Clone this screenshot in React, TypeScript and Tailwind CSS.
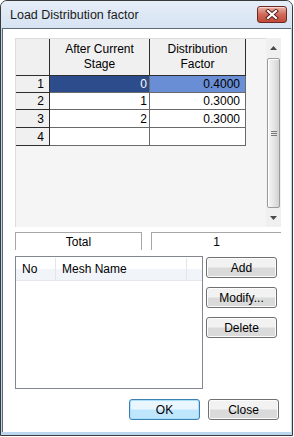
import React from 'react';

const rows = [
  { n: '1', a: '0', b: '0.4000', h: 'h-[17px]', sel: true },
  { n: '2', a: '1', b: '0.3000', h: 'h-[17px]', sel: false },
  { n: '3', a: '2', b: '0.3000', h: 'h-[18px]', sel: false },
  { n: '4', a: '', b: '', h: 'h-[18px]', sel: false },
];

function CloseButton() {
  return (
    <div className="w-[30px] h-[17px] rounded-[3px] border border-[#6e2a22] bg-gradient-to-b from-[#eab2a6] via-[#d06a5a] to-[#c04a38] flex items-center justify-center shadow-[inset_0_1px_0_rgba(255,255,255,0.5)]">
      <svg width="14" height="11" viewBox="0 0 14 11">
        <path d="M3 2 L11 9 M11 2 L3 9" stroke="#5a1d16" strokeWidth="4" strokeLinecap="square" />
        <path d="M3 2 L11 9 M11 2 L3 9" stroke="#ffffff" strokeWidth="2.2" strokeLinecap="square" />
      </svg>
    </div>
  );
}

function Scrollbar() {
  return (
    <div className="w-[15px] bg-[#f0f0f0] flex flex-col">
      <div className="h-[20px] flex items-center justify-center">
        <svg width="7" height="4" viewBox="0 0 7 4">
          <path d="M0 4 L3.5 0 L7 4 Z" fill="#4a4a4a" />
        </svg>
      </div>
      <div className="flex-1 mx-[1px] rounded-[2px] border border-[#9b9b9b] bg-gradient-to-r from-[#f6f6f6] via-[#e6e6e6] to-[#d2d2d2] flex items-center justify-center shadow-[inset_1px_1px_0_#ffffff]">
        <div className="flex flex-col gap-[1px]">
          <div className="w-[6px] h-[1px] bg-[#7a7a7a]" />
          <div className="w-[6px] h-[1px] bg-[#7a7a7a]" />
          <div className="w-[6px] h-[1px] bg-[#7a7a7a]" />
        </div>
      </div>
      <div className="h-[19px] flex items-center justify-center">
        <svg width="7" height="4" viewBox="0 0 7 4">
          <path d="M0 0 L3.5 4 L7 0 Z" fill="#4a4a4a" />
        </svg>
      </div>
    </div>
  );
}

function Button({ label, primary }: { label: string; primary?: boolean }) {
  return (
    <button
      className={
        'w-[71px] h-[21px] rounded-[3px] border text-[12px] text-black leading-none flex items-center justify-center ' +
        (primary
          ? 'border-[#3c7fb1] bg-gradient-to-b from-[#eaf6fd] from-45% to-[#bee6fd] to-55% shadow-[inset_0_0_0_1px_#a8e0fb]'
          : 'border-[#707070] bg-gradient-to-b from-[#f2f2f2] from-45% to-[#dadada] to-55% shadow-[inset_0_0_0_1px_#fcfcfc]')
      }
    >
      {label}
    </button>
  );
}

export default function App() {
  return (
    <div className="w-[294px] h-[437px] bg-white font-['Liberation_Sans',Arial,sans-serif] text-[12px] text-black">
      <div className="w-[293px] h-[436px] border border-[#3a3a3a] rounded-t-[7px] bg-[#bcd6ef] flex flex-col overflow-hidden">
        {/* title bar */}
        <div className="h-[27px] shrink-0 bg-gradient-to-b from-[#e6eef8] to-[#d6e3f2] flex items-center justify-between pl-[9px] pr-[5px]">
          <span className="text-[12.5px] text-[#1a1a1a] pt-[1px]">Load Distribution factor</span>
          <CloseButton />
        </div>

        {/* client area */}
        <div className="flex-1 ml-[1px] mr-[1px] mb-[3px] bg-white border-l border-t border-[#5e6a78] flex flex-col pl-[12px] pr-[10px] pt-[9px]">
          {/* grid */}
          <div className="flex h-[189px]">
            <div className="flex-1 bg-[#f5f5f5] border-t border-l border-[#dcdcdc]">
              <div className="flex h-[37px]">
                <div className="w-[34px] bg-[#f0f0f0] border-r border-b border-[#2e2e2e]" />
                <div className="w-[100px] bg-[#f0f0f0] border-r border-b border-[#2e2e2e] flex flex-col items-center justify-center leading-[15px]">
                  <span>After Current</span>
                  <span>Stage</span>
                </div>
                <div className="w-[96px] bg-[#f0f0f0] border-r border-b border-[#2e2e2e] flex flex-col items-center justify-center leading-[15px]">
                  <span>Distribution</span>
                  <span>Factor</span>
                </div>
              </div>
              {rows.map((r) => (
                <div key={r.n} className={'flex ' + r.h}>
                  <div className="w-[34px] bg-[#f0f0f0] border-r border-b border-[#2e2e2e] flex items-center justify-end pr-[5px]">
                    {r.n}
                  </div>
                  <div
                    className={
                      'w-[100px] border-r border-b border-[#6a6a6a] flex items-center justify-end pr-[2px] ' +
                      (r.sel ? 'bg-[#2c4c8c] text-white' : 'bg-white')
                    }
                  >
                    {r.a}
                  </div>
                  <div
                    className={
                      'w-[96px] border-r border-b border-[#6a6a6a] flex items-center justify-end pr-[5px] ' +
                      (r.sel ? 'bg-[#6a8ed5]' : 'bg-white')
                    }
                  >
                    {r.b}
                  </div>
                </div>
              ))}
            </div>
            <Scrollbar />
          </div>

          {/* total row */}
          <div className="flex h-[18px] mt-[5px] gap-[9px]">
            <div className="w-[127px] border-t border-l border-r border-[#a6a6a6] flex items-center justify-center">
              Total
            </div>
            <div className="flex-1 border-t border-l border-[#a6a6a6] flex items-center justify-center">1</div>
          </div>

          {/* mesh list + buttons */}
          <div className="flex mt-[6px] gap-[3px]">
            <div className="w-[188px] h-[133px] border border-[#828790] bg-white">
              <div className="h-[23px] mt-[1px] flex bg-gradient-to-b from-[#ffffff] from-50% to-[#f1f4f8] to-50% border-b border-[#e4e7ec]">
                <div className="w-[40px] border-r border-[#e2e5ea] flex items-center pl-[6px]">No</div>
                <div className="w-[131px] border-r border-[#e2e5ea] flex items-center pl-[6px]">Mesh Name</div>
              </div>
            </div>
            <div className="flex flex-col gap-[9px] pt-[1px]">
              <Button label="Add" />
              <Button label="Modify..." />
              <Button label="Delete" />
            </div>
          </div>

          {/* footer */}
          <div className="flex justify-end gap-[8px] mt-[10px] pr-[2px]">
            <Button label="OK" primary />
            <Button label="Close" />
          </div>
        </div>
      </div>
    </div>
  );
}
